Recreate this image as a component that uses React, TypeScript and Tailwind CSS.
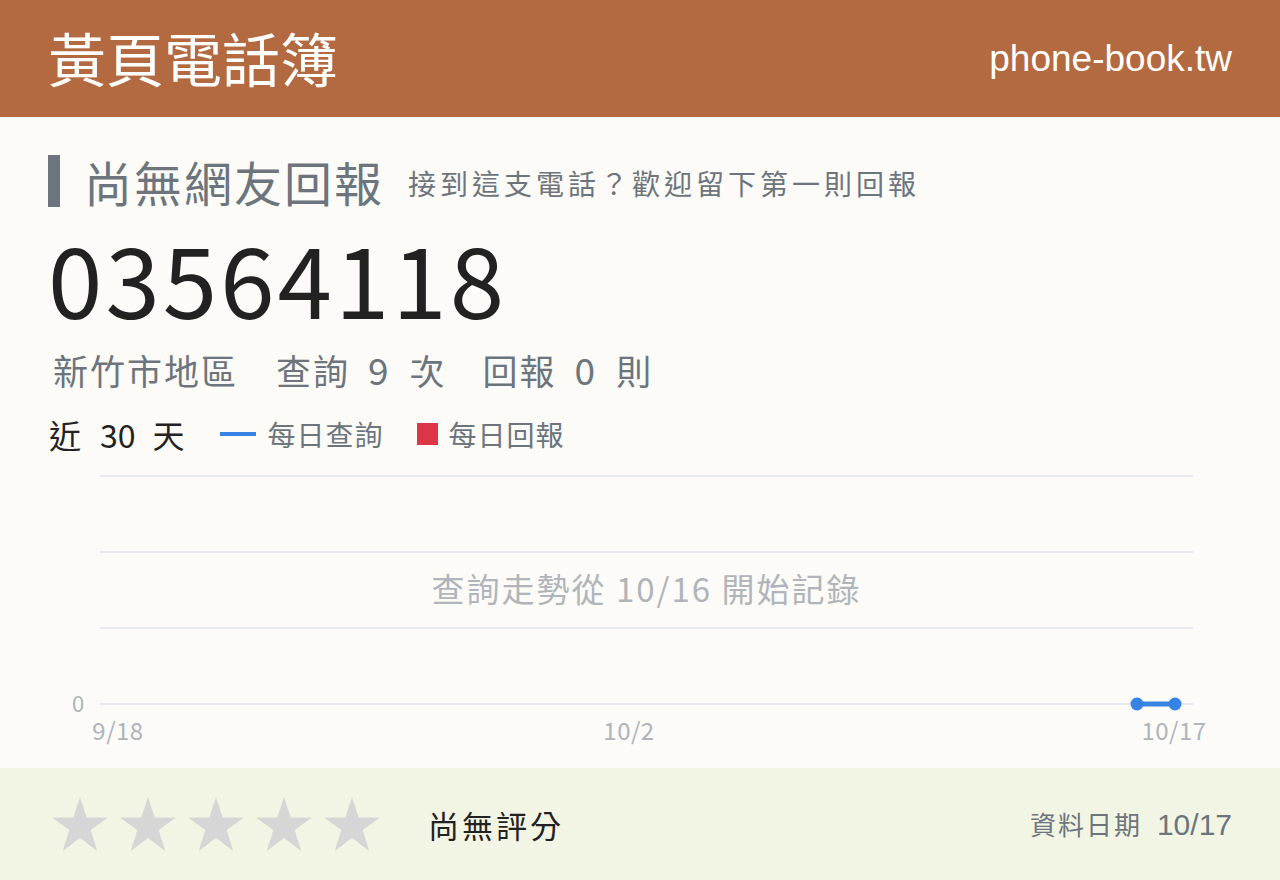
const cjk = "font-['Noto_Sans_CJK_TC','Noto_Sans_CJK_SC',sans-serif]";
const arial = "font-['Liberation_Sans','Noto_Sans_CJK_TC',sans-serif]";

// 30-day query trend, only the last two days have data
const gridY = [16, 92, 168, 244];
const xLabels = [
  { x: 70, label: '9/18' },
  { x: 581, label: '10/2' },
  { x: 1126, label: '10/17' },
];

function TrendChart() {
  return (
    <div className="relative h-[300px]">
      <svg width="1184" height="300" className="block">
        {gridY.map((y) => (
          <line key={y} x1="52" x2="1145" y1={y} y2={y} stroke="#e6e8ec" strokeWidth="2" />
        ))}
        <text x="30" y="252" fill="#adb4bd" fontSize="22" textAnchor="middle" fontFamily="Noto Sans CJK TC, sans-serif">
          0
        </text>
        {xLabels.map((l) => (
          <text
            key={l.label}
            x={l.x}
            y="280"
            fill="#adb4bd"
            fontSize="24"
            letterSpacing="0.5"
            textAnchor="middle"
            fontFamily="Noto Sans CJK TC, sans-serif"
          >
            {l.label}
          </text>
        ))}
        <line x1="1089" x2="1127" y1="244" y2="244" stroke="#3584e4" strokeWidth="5" />
        <circle cx="1089" cy="244" r="6.5" fill="#3584e4" />
        <circle cx="1127" cy="244" r="6.5" fill="#3584e4" />
      </svg>
      <div className={`absolute inset-x-0 top-[104px] pl-[52px] pr-[39px] text-center text-[33px] tracking-[2px] text-[#b0b5bb] ${cjk}`}>
        查詢走勢從 10/16 開始記錄
      </div>
    </div>
  );
}

function StarIcon() {
  return (
    <svg width="56" height="54" viewBox="0 0 56 54">
      <polygon
        points="28,0 34.6,20.4 56,20.4 38.7,33 45.3,54 28,41 10.7,54 17.3,33 0,20.4 21.4,20.4"
        fill="#d6d6d6"
      />
    </svg>
  );
}

export default function App() {
  return (
    <div className="w-[1280px] h-[880px] bg-[#fcfbf7] flex flex-col overflow-hidden">
      {/* Header */}
      <header className="h-[117px] bg-[#b46a40] flex items-center justify-between px-12 text-white">
        <h1 className={`text-[58px] leading-none -mt-[4px] ${cjk}`}>黃頁電話簿</h1>
        <span className={`text-[37px] leading-none ${arial}`}>phone-book.tw</span>
      </header>

      <main className="flex-1 px-12 pt-[38px]">
        {/* Report status */}
        <div className="flex items-center">
          <div className="w-3 h-[52px] bg-[#6c757d]" />
          <h2 className={`ml-6 text-[48px] tracking-[2px] leading-none text-[#6c757d] ${cjk}`}>尚無網友回報</h2>
          <p className={`ml-6 mt-1 text-[28px] tracking-[4px] leading-none text-[#6c757d] ${cjk}`}>
            接到這支電話？歡迎留下第一則回報
          </p>
        </div>

        <div className={`mt-[20px] text-[98px] tracking-[3px] leading-none text-[#222] ${cjk}`}>03564118</div>

        <div className={`mt-[26px] flex items-baseline text-[35px] leading-none text-[#6c757d] ${cjk}`}>
          <span className="ml-[5px] tracking-[2px]">新竹市地區</span>
          <span className="ml-[38px] tracking-[2px]">查詢</span>
          <span className="ml-[18px] text-[37px]">9</span>
          <span className="ml-[21px]">次</span>
          <span className="ml-[38px] tracking-[2px]">回報</span>
          <span className="ml-[18px] text-[37px]">0</span>
          <span className="ml-[21px]">則</span>
        </div>

        {/* Chart legend */}
        <div className={`mt-[30px] flex items-center ${cjk}`}>
          <div className="flex items-baseline text-[32px] leading-none text-[#222]">
            <span className="ml-[1px]">近</span>
            <span className="ml-[19px]">30</span>
            <span className="ml-[17px]">天</span>
          </div>
          <span className="ml-[35px] w-9 h-1 bg-[#3584e4]" />
          <span className="ml-3 text-[28px] tracking-[1px] leading-none text-[#6c757d]">每日查詢</span>
          <span className="ml-[33px] w-[21px] h-[22px] bg-[#dc3545]" />
          <span className="ml-[11px] text-[28px] tracking-[1px] leading-none text-[#6c757d]">每日回報</span>
        </div>

        <div className="mt-[10px]">
          <TrendChart />
        </div>
      </main>

      {/* Rating footer */}
      <footer className="h-[112px] bg-[#f2f5e3] flex items-center justify-between px-12">
        <div className="flex items-center">
          <div className="flex gap-3 pl-1">
            {[0, 1, 2, 3, 4].map((i) => (
              <StarIcon key={i} />
            ))}
          </div>
          <span className={`ml-[48px] text-[31px] tracking-[3px] leading-none text-[#222] ${cjk}`}>尚無評分</span>
        </div>
        <div className="flex items-baseline text-[#6c757d]">
          <span className={`text-[26px] tracking-[2px] ${cjk}`}>資料日期</span>
          <span className={`ml-[15px] text-[30px] ${arial}`}>10/17</span>
        </div>
      </footer>
    </div>
  );
}
